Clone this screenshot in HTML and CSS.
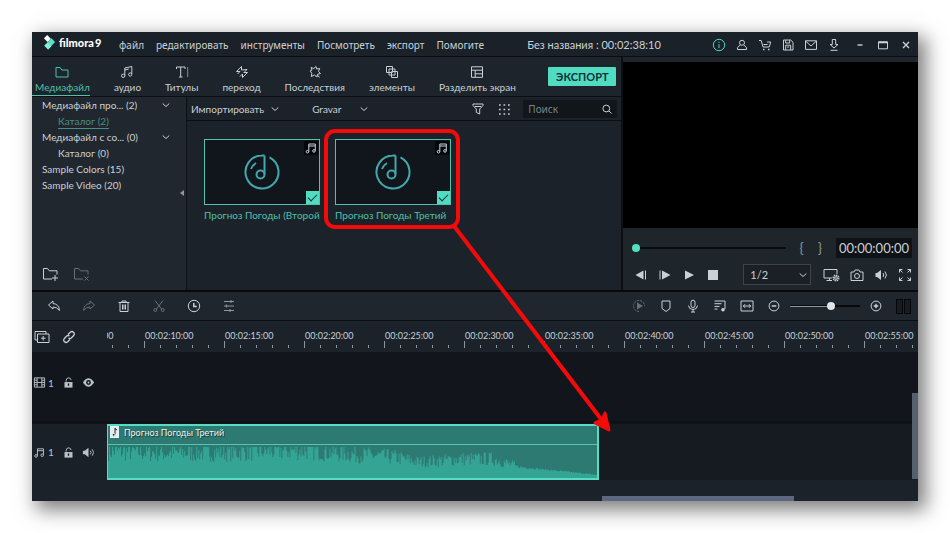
FILE: index.html
```html
<!DOCTYPE html>
<html lang="ru">
<head>
  <meta charset="UTF-8">
  <meta name="viewport" content="width=device-width, initial-scale=1.0">
  <title>Filmora 9</title>
  <link rel="stylesheet" href="styles.css">
</head>
<body>
  <div class="window">

    <header class="titlebar">
      <div class="logo">
        <svg width="14" height="16" viewBox="0 0 14 16"><path d="M1 3.500 4.500 0l4 4L5 7.500z" fill="#fff"/><path d="M9 3.500 13 7.500 5.500 15.500 1.500 11.500z" fill="#5be3c6"/><path d="M1.500 11.500 5 8l4 4-3.500 3.500z" fill="#8aeedb"/></svg>
        <span>filmora<b>9</b></span>
      </div>
      <nav class="menu">
        <button>файл</button>
        <button>редактировать</button>
        <button>инструменты</button>
        <button>Посмотреть</button>
        <button>экспорт</button>
        <button>Помогите</button>
      </nav>
      <h1 class="project">Без названия : 00:02:38:10</h1>
      <div class="system">
        <button class="teal" aria-label="Информация"><svg viewBox="0 0 14 14"><circle cx="7" cy="7" r="5.700"/><path d="M7 6.200v4M7 3.700v1.200"/></svg></button>
        <button aria-label="Профиль"><svg viewBox="0 0 14 14"><circle cx="7" cy="4.800" r="2.500"/><path d="M5.300 7 2.500 9.500v2h9v-2L8.700 7"/></svg></button>
        <button aria-label="Магазин"><svg viewBox="0 0 14 14"><path d="M1 2.500h2.200l1.800 6.500h6.200l1.500-5H9M5.500 6.500h4"/><path d="M5 11.500h1.500M10 11.500h1.500" stroke-width="1.600"/></svg></button>
        <button aria-label="Сохранить"><svg viewBox="0 0 14 14"><path d="M2.500 2h7.200L12 4.300V12H2.500zM4.700 12V7.200h5V12M4.700 2v3h4V2M6.200 9h2"/></svg></button>
        <button aria-label="Сообщения"><svg viewBox="0 0 14 14"><path d="M1.500 2.800h11v8.600h-11zM1.500 3l5.500 5 5.500-5"/></svg></button>
        <button aria-label="Загрузки"><svg viewBox="0 0 14 14"><path d="M5.300 1.500h3.400v5h2.200L7 10 3.100 6.500h2.200zM3.500 12.300h7"/></svg></button>
      </div>
      <div class="system caption">
        <button aria-label="Свернуть"><svg viewBox="0 0 14 14"><path d="M4.500 7h5" stroke-width="1.400"/></svg></button>
        <button aria-label="Развернуть"><svg viewBox="0 0 14 14"><path d="M2.500 4h9v6.800h-9z"/><path d="M2.500 4.300h9" stroke-width="2"/></svg></button>
        <button aria-label="Закрыть"><svg viewBox="0 0 14 14"><path d="m4 4 6 6M10 4l-6 6" stroke-width="1.400"/></svg></button>
      </div>
    </header>

    <main class="workspace">
      <section class="library">
        <div class="tabs">
          <button class="tab active"><svg viewBox="0 0 14 14"><path d="M1 2.500h4.200L6.700 5H13v7H1z"/></svg>Медиафайл</button>
          <button class="tab"><svg viewBox="0 0 14 14"><path d="M4.800 10.500V3l7-1.500V9M4.800 5l4-1"/><circle cx="3.200" cy="10.800" r="1.700"/><circle cx="10.200" cy="9.500" r="1.600"/></svg>аудио</button>
          <button class="tab"><svg viewBox="0 0 14 14"><path d="M1.500 4V2h8.500v2M5.700 2v10M4 12h3.500" /><path d="M12.700 2v10" opacity=".6"/></svg>Титулы</button>
          <button class="tab"><svg viewBox="0 0 14 14"><path d="M1.500 6.500 6.500 1.500V5l5.500-.5L8.500 8M1.500 6.500H5L2.500 9M12.500 7.500l-5 5V9L5 11.500M12.500 7.500H9"/></svg>переход</button>
          <button class="tab"><svg viewBox="0 0 14 14"><path d="m3 2.500 2.700 1L8 1.500l.7 2.500 3-.5-1.200 3 2 2-3 .8L9 12 6.500 10l-3.200 1.500.5-3.300L2 6l2-1zM9.500 10l2 2.500"/></svg>Последствия</button>
          <button class="tab"><svg viewBox="0 0 14 14"><path d="M1.500 1.500h6v6h-6zM4 7.500V10h6V4H7.500M6.500 10v2.500h6v-6H10M4 7.500V4h3.500M6.500 10V6.500H10"/></svg>элементы</button>
          <button class="tab"><svg viewBox="0 0 14 14"><path d="M1.500 1.800h11v10.500h-11zM1.500 5.200h11M5.200 5.200v7M5.200 8.800h7.300"/></svg>Разделить экран</button>
          <button class="export">ЭКСПОРТ</button>
        </div>

        <div class="library-body">
          <aside class="tree">
            <ul>
              <li><button>Медиафайл про... (2)<svg class="chevron" viewBox="0 0 8 8"><path d="m.7 2.500 3.300 3 3.300-3"/></svg></button></li>
              <li class="child"><a class="current" href="#">Каталог (2)</a></li>
              <li><button>Медиафайл с со... (0)<svg class="chevron" viewBox="0 0 8 8"><path d="m.7 2.500 3.300 3 3.300-3"/></svg></button></li>
              <li class="child"><a href="#">Каталог (0)</a></li>
              <li><a href="#">Sample Colors (15)</a></li>
              <li><a href="#">Sample Video (20)</a></li>
            </ul>
            <button class="collapse" aria-label="Скрыть панель"><svg viewBox="0 0 4 6"><path d="M4 0v6L0 3z"/></svg></button>
            <div class="tree-actions">
              <button aria-label="Новая папка"><svg viewBox="0 0 18 14"><path d="M10 12H1.500V1.500h4l1.800 2.300H15v3.700M13 8v6M10 11h6"/></svg></button>
              <button class="off" aria-label="Удалить папку"><svg viewBox="0 0 18 14"><path d="M10 12H1.500V1.500h4l1.800 2.300H15v3.700M11.500 9.500l4 4M15.500 9.500l-4 4"/></svg></button>
            </div>
          </aside>

          <div class="media">
            <div class="filters">
              <button>Импортировать<svg class="chevron" viewBox="0 0 8 8"><path d="m.7 2.500 3.300 3 3.300-3"/></svg></button>
              <button class="record">Gravar<svg class="chevron" viewBox="0 0 8 8"><path d="m.7 2.500 3.300 3 3.300-3"/></svg></button>
              <button class="icon push" aria-label="Фильтр"><svg viewBox="0 0 14 14"><path d="M2 2h10v1.500L8.700 7v5l-3.400-1.500V7L2 3.500zM4 4.500h6"/></svg></button>
              <button class="icon" aria-label="Вид"><svg viewBox="0 0 14 14"><path d="M2 3h11M2 7.500h11M2 12h11" stroke-width="1.700" stroke-dasharray="1.700 2.800"/></svg></button>
              <label class="search">
                <input type="text" placeholder="Поиск" aria-label="Поиск">
                <svg viewBox="0 0 10 10"><circle cx="4.300" cy="4.500" r="3.400"/><path d="m7 7 2.500 2.500"/></svg>
              </label>
            </div>

            <div class="clips">
              <label class="clip-card">
                <span class="thumb">
                  <svg class="disc" viewBox="0 0 36 36"><path d="M18 1.500A16.500 16.500 0 1 0 25.500 3.300M20.500 1.500v18.500M17.500 1.500h3M7 15a12 12 0 0 1 5-6"/><circle cx="16.500" cy="20.500" r="4"/></svg>
                  <svg class="note" viewBox="0 0 14 14"><path d="M4.800 10.500V3h6.500v6.500M4.800 5h6.500"/><circle cx="3.500" cy="10.700" r="1.300"/><circle cx="10" cy="9.900" r="1.300"/></svg>
                  <input type="checkbox" checked>
                </span>
                <span class="clip-name">Прогноз Погоды (Второй)</span>
              </label>
              <label class="clip-card">
                <span class="thumb">
                  <svg class="disc" viewBox="0 0 36 36"><path d="M18 1.500A16.500 16.500 0 1 0 25.500 3.300M20.500 1.500v18.500M17.500 1.500h3M7 15a12 12 0 0 1 5-6"/><circle cx="16.500" cy="20.500" r="4"/></svg>
                  <svg class="note" viewBox="0 0 14 14"><path d="M4.800 10.500V3h6.500v6.500M4.800 5h6.500"/><circle cx="3.500" cy="10.700" r="1.300"/><circle cx="10" cy="9.900" r="1.300"/></svg>
                  <input type="checkbox" checked>
                </span>
                <span class="clip-name">Прогноз Погоды Третий</span>
              </label>
            </div>
          </div>
        </div>
      </section>

      <section class="player">
        <div class="screen"></div>
        <div class="seek">
          <input type="range" min="0" max="100" value="0" aria-label="Позиция">
          <button aria-label="Начало отрезка">{</button>
          <button aria-label="Конец отрезка">}</button>
          <output>00:00:00:00</output>
        </div>
        <div class="transport">
          <button aria-label="Кадр назад"><svg class="solid" viewBox="0 0 14 14"><path d="M9.500 2.500v9L1.500 7z"/><path d="M11 2.500h1v9h-1z"/></svg></button>
          <button aria-label="Кадр вперёд"><svg class="solid" viewBox="0 0 14 14"><path d="M4 2.500v9L12.500 7z"/><path d="M1.500 2.500h1v9h-1z"/></svg></button>
          <button aria-label="Воспроизвести"><svg class="solid" viewBox="0 0 14 14"><path d="M3 2.500v9L12 7z"/></svg></button>
          <button aria-label="Стоп"><svg class="solid" viewBox="0 0 14 14"><path d="M2 2h10v10H2z"/></svg></button>
          <span class="quality">
            <select aria-label="Качество"><option>1/2</option></select>
            <svg class="chevron" viewBox="0 0 8 8"><path d="m.7 2.500 3.300 3 3.300-3"/></svg>
          </span>
          <button class="wide" aria-label="Настройки экрана"><svg viewBox="0 0 17 14"><path d="M9 10H1V1.500h13V6M3.500 12.500H9M6.500 10v2.500"/><circle cx="13" cy="10" r="2.600" stroke-width="1.800" stroke-dasharray="1.300 .7"/><circle cx="13" cy="10" r="1.300"/></svg></button>
          <button aria-label="Снимок"><svg viewBox="0 0 14 14"><path d="M1 4h3l1-2h4l1 2h3v8.500H1z"/><circle cx="7" cy="8" r="2.500"/></svg></button>
          <button aria-label="Громкость"><svg viewBox="0 0 14 14"><path class="fill" d="M1.500 5H3l4-3v10L3 9H1.500z"/><path d="M9 5q1.500 2 0 4M11 3.500q2.800 3.500 0 7"/></svg></button>
          <button aria-label="Во весь экран"><svg viewBox="0 0 14 14"><path d="M1.500 4.500v-3h3M1.500 1.500l3 3M9.500 1.500h3v3M12.500 1.500l-3 3M1.500 9.500v3h3M1.500 12.500l3-3M12.500 9.500v3h-3M12.500 12.500l-3-3"/></svg></button>
        </div>
      </section>
    </main>

    <div class="toolbar">
      <div class="edit-tools">
        <button aria-label="Отменить"><svg viewBox="0 0 14 14"><path d="M1.500 6 6 2v2.500q6 .5 6.500 7Q10 8 6 8v2z"/></svg></button>
        <button class="off" aria-label="Повторить"><svg viewBox="0 0 14 14"><path d="M12.500 6 8 2v2.500q-6 .5-6.500 7Q4 8 8 8v2z"/></svg></button>
        <button aria-label="Удалить"><svg viewBox="0 0 14 14"><path d="M1.500 3.500h11M5 3.500V2h4v1.500M3 3.500V12.500h8v-9M5.500 5.500v5M7 5.500v5M8.500 5.500v5"/></svg></button>
        <button class="off" aria-label="Разрезать"><svg viewBox="0 0 14 14"><path d="m3 1.500 6.500 8.500M11 1.500 4.500 10"/><circle cx="3.300" cy="11" r="1.500"/><circle cx="10.700" cy="11" r="1.500"/></svg></button>
        <button aria-label="Скорость"><svg viewBox="0 0 14 14"><circle cx="7" cy="7" r="5.700"/><path d="M6.800 4v3.500h3" stroke-width="1.500"/></svg></button>
        <button class="dim" aria-label="Настройки"><svg viewBox="0 0 14 14"><path d="M2 2.500h10M2 7h10M2 11.500h10M9 1v3M4.500 5.500v3M8 10v3"/></svg></button>
      </div>
      <div class="view-tools">
        <button class="off" aria-label="Рендер"><svg viewBox="0 0 14 14"><path d="M7 12.500A5.500 5.500 0 1 1 12.500 7" stroke-dasharray="2 1"/><path class="fill" d="M5 3.500v7L11 7z"/></svg></button>
        <button aria-label="Маркер"><svg viewBox="0 0 14 14"><path d="M3 2h8v7.500L7 12.500 3 9.500z"/></svg></button>
        <button aria-label="Запись голоса"><svg viewBox="0 0 14 14"><rect x="5" y="1.200" width="4" height="7.300" rx="2"/><path d="M2.500 6.500q.3 4 4.500 4t4.500-4M7 10.500V13M5 13h4"/></svg></button>
        <button aria-label="Аудиомикшер"><svg viewBox="0 0 14 14"><path d="M1.500 2h10.500v8M1.500 4.700h7M1.500 7.400h5M1.500 10h3"/><circle class="fill" cx="10" cy="10.800" r="1.800"/></svg></button>
        <button aria-label="По размеру"><svg viewBox="0 0 14 14"><path d="M1 2h12v10H1zM3.500 7h7M5 5.200 3.300 7 5 8.800M9 5.200 10.700 7 9 8.800"/></svg></button>
        <button aria-label="Уменьшить"><svg viewBox="0 0 14 14"><circle cx="7" cy="7" r="4.900"/><path d="M4.700 7h4.600" stroke-width="1.500"/></svg></button>
        <input class="zoom" type="range" min="0" max="100" value="60" aria-label="Масштаб">
        <button aria-label="Увеличить"><svg viewBox="0 0 14 14"><circle cx="7" cy="7" r="4.900"/><path d="M4.700 7h4.600M7 4.700v4.600" stroke-width="1.400"/></svg></button>
        <span class="meter"><i></i><i></i></span>
      </div>
    </div>

    <section class="timeline">
      <div class="row">
        <div class="head ruler-head">
          <button aria-label="Добавить дорожку"><svg viewBox="0 0 16 14"><path d="M3.500 10H1V1.500h11V4M3.500 4H15v8.500H3.500zM9.200 6v4.500M7 8.200h4.500"/></svg></button>
          <button aria-label="Связать"><svg viewBox="0 0 14 14"><path d="m6 4.500 2.300-2.300q1.700-1.400 3.200 0t.2 3.300L9.300 8Q7.800 9 6.500 8M8 9.500l-2.300 2.300q-1.700 1.400-3.200 0t-.2-3.300L4.700 6Q6.200 5 7.500 6" stroke-width="1.300"/></svg></button>
        </div>
        <ol class="ruler">
          <li>00:02:05:00</li>
          <li>00:02:10:00</li>
          <li>00:02:15:00</li>
          <li>00:02:20:00</li>
          <li>00:02:25:00</li>
          <li>00:02:30:00</li>
          <li>00:02:35:00</li>
          <li>00:02:40:00</li>
          <li>00:02:45:00</li>
          <li>00:02:50:00</li>
          <li>00:02:55:00</li>
        </ol>
      </div>
      <div class="row video-row">
        <div class="head">
          <svg viewBox="0 0 14 14"><path d="M1.500 2h11v10h-11zM4.500 2v10M9.500 2v10M1.500 4.500h3M1.500 7h11M1.500 9.500h3M9.500 4.500h3M9.500 9.500h3"/></svg>
          <span>1</span>
          <button aria-label="Заблокировать видео"><svg viewBox="0 0 14 14"><path class="fill" d="M2.700 6.500h8.600v6H2.700z"/><path d="M4.500 6V4.500q.3-2.500 2.700-2.500t2.500 2.500"/><path class="hole" d="M6.300 8h1.400v2.500H6.300z"/></svg></button>
          <button aria-label="Показать видео"><svg viewBox="0 0 14 14"><path class="fill" d="M1 7q6-9 12 0Q7 16 1 7z"/><circle class="hole" cx="7" cy="7" r="2.600"/><circle class="fill" cx="7" cy="7" r="1"/></svg></button>
        </div>
        <div class="lane"></div>
      </div>
      <div class="row audio-row">
        <div class="head">
          <svg viewBox="0 0 14 14"><path d="M4.800 10.500V3h6.500v6.500M4.800 5h6.500"/><circle cx="3.300" cy="10.700" r="1.400"/><circle cx="9.900" cy="9.900" r="1.400"/></svg>
          <span>1</span>
          <button aria-label="Заблокировать аудио"><svg viewBox="0 0 14 14"><path class="fill" d="M2.700 6.500h8.600v6H2.700z"/><path d="M4.500 6V4.500q.3-2.500 2.700-2.500t2.500 2.500"/><path class="hole" d="M6.300 8h1.400v2.500H6.300z"/></svg></button>
          <button aria-label="Звук дорожки"><svg viewBox="0 0 14 14"><path class="fill" d="M1 5h2l4-3v10L3 9H1z"/><path d="M9 5q1.500 2 0 4M11 3.500q2.800 3.500 0 7"/></svg></button>
        </div>
        <div class="lane">
          <article class="audio-clip">
            <h2><svg viewBox="0 0 9 12"><path d="M0 0h9v12H0z" fill="#e3edf0"/><path d="M5 2v6.500M5 2.500l2 1.500" stroke="#18232b"/><circle cx="3.700" cy="8.800" r="1.400" fill="#18232b"/></svg>Прогноз Погоды Третий</h2>
            <svg class="wave" viewBox="0 0 488 33" preserveAspectRatio="none"><path id="wave"/></svg>
          </article>
        </div>
      </div>
      <div class="timeline-end"></div>
      <span class="scroll-y"></span>
      <span class="scroll-x"></span>
    </section>

    <svg class="pointer" width="600" height="420" viewBox="0 0 600 420">
      <rect x="294" y="99" width="132" height="96" rx="9"/>
      <path d="M422 194 572 391"/>
      <path class="tip" d="m577 398-14-7 7-3 3-7z"/>
    </svg>
  </div>

  <script src="wave.js"></script>
</body>
</html>
```

FILE: styles.css
```css
* {
  box-sizing: border-box;
}
body {
  margin: 0;
  padding: 32px;
  background: #fff;
  font-family: Lato, "Noto Sans", sans-serif;
  font-size: 10px;
  color: #c9d1d6;
}
button, input, select {
  font: inherit;
  color: inherit;
  background: none;
  border: 0;
  padding: 0;
  margin: 0;
}
button {
  display: flex;
  align-items: center;
  white-space: nowrap;
  cursor: pointer;
}
a {
  color: inherit;
  text-decoration: none;
}
ul, ol {
  list-style: none;
  margin: 0;
  padding: 0;
}
svg {
  display: block;
  flex: none;
  width: 14px;
  height: 14px;
  fill: none;
  stroke: currentColor;
}
svg.solid, svg .fill {
  fill: currentColor;
  stroke: none;
}
svg .hole {
  fill: #12171d;
  stroke: none;
}
.chevron {
  width: 8px;
  height: 8px;
}
.off {
  color: #66707a;
}
.dim {
  color: #8d979e;
}

.window {
  position: relative;
  display: flex;
  flex-direction: column;
  min-height: calc(100vh - 64px);
  background: #1b2229;
  box-shadow: 6px 7px 18px 2px rgba(0, 0, 0, 0.5);
}

/* title bar */
.titlebar {
  display: flex;
  align-items: center;
  height: 25px;
  padding: 1px 5px 0 11px;
  background: #1b2128;
  border-bottom: 1px solid #090c10;
}
.logo {
  display: flex;
  align-items: center;
  gap: 3px;
  width: 76px;
  padding-bottom: 4px;
  color: #fff;
  font-size: 11px;
  font-weight: 900;
}
.logo svg {
  width: 13px;
  height: 15px;
  stroke: none;
}
.logo b {
  padding-left: 1px;
}
.menu {
  display: flex;
  gap: 12px;
  font-family: "Noto Sans", sans-serif;
}
.project {
  margin: 0 8px 0 0;
  flex: 1;
  text-align: center;
  font-size: 11px;
  font-weight: normal;
  white-space: nowrap;
}
.system {
  display: flex;
  gap: 9px;
}
.caption {
  margin-left: 12px;
}
.teal {
  color: #4fd0c4;
}

/* library */
.workspace {
  display: flex;
  flex: 1;
  min-height: 233px;
}
.library {
  display: flex;
  flex-direction: column;
  flex: 2;
  min-width: 0;
  border-right: 2px solid #0c1015;
}
.tabs {
  display: flex;
  align-items: center;
  gap: 24px;
  height: 40px;
  padding-right: 5px;
  background: #1d242c;
  border-bottom: 1px solid #0b0f13;
}
.tab {
  flex-direction: column;
  gap: 1px;
  height: 39px;
  padding-top: 8px;
  line-height: 14px;
  border-bottom: 1px solid transparent;
}
.tab.active {
  padding-left: 3px;
  color: #4fc0aa;
  border-color: #4fc0aa;
}
.export {
  flex: none;
  justify-content: center;
  margin-left: auto;
  width: 68px;
  height: 19px;
  border-radius: 1px;
  background: #4fdcc0;
  color: #12303a;
  font-size: 11px;
  font-weight: bold;
}
.library-body {
  display: flex;
  flex: 1;
}
.tree {
  position: relative;
  display: flex;
  flex-direction: column;
  width: 155px;
  padding-left: 10px;
  background: #20272f;
  border-right: 1px solid #0d1116;
}
.tree li {
  height: 16px;
  line-height: 16px;
}
.tree li button {
  justify-content: space-between;
  width: 100%;
  padding-right: 16px;
}
.tree .child {
  padding-left: 16px;
}
.tree .current {
  color: #4a8d86;
  text-decoration: underline;
  text-underline-offset: 3px;
}
.collapse {
  position: absolute;
  right: 2px;
  top: 48%;
  color: #8d979e;
}
.collapse svg {
  width: 4px;
  height: 6px;
  fill: currentColor;
  stroke: none;
}
.tree-actions {
  display: flex;
  gap: 13px;
  margin-top: auto;
  padding-bottom: 9px;
}
.tree-actions svg {
  width: 18px;
}
.media {
  flex: 1;
  min-width: 0;
}
.filters {
  display: flex;
  align-items: center;
  height: 24px;
  padding: 0 4px;
  border-bottom: 1px solid #0b0f13;
}
.filters .chevron {
  margin-left: 7px;
}
.filters .record {
  margin-left: 33px;
}
.filters .record .chevron {
  margin-left: 19px;
}
.filters .push {
  margin-left: auto;
}
.filters .icon {
  margin-right: 12px;
}
.search {
  display: flex;
  align-items: center;
  width: 94px;
  height: 18px;
  padding: 0 5px;
  background: #11161b;
}
.search input {
  flex: 1;
  min-width: 0;
  outline: none;
  font-family: "Noto Sans", sans-serif;
}
.search input::placeholder {
  color: #7b858c;
}
.search svg {
  width: 10px;
  height: 10px;
}
.clips {
  display: flex;
  flex-wrap: wrap;
  gap: 15px;
  padding: 18px 17px;
}
.clip-card {
  width: 116px;
  color: #4fc0aa;
}
.thumb {
  position: relative;
  display: flex;
  align-items: center;
  justify-content: center;
  height: 66px;
  background: #11161c;
  border: 1px solid #57bfae;
}
.disc {
  width: 36px;
  height: 36px;
  color: #43a7ab;
  stroke-width: 2;
}
.note {
  position: absolute;
  top: 1px;
  right: 1px;
  background: #05070a;
  color: #c9d1d6;
}
.thumb input {
  position: absolute;
  right: 0;
  bottom: 0;
  appearance: none;
  width: 13px;
  height: 13px;
  background: #4fdcc0;
}
.thumb input:checked::after {
  content: "";
  display: block;
  width: 8px;
  height: 4px;
  margin: 3px 2px;
  border: solid #12303a;
  border-width: 0 0 1px 1px;
  transform: rotate(-45deg);
}
.clip-name {
  display: block;
  padding-top: 3px;
  line-height: 14px;
  white-space: nowrap;
  overflow: hidden;
}

/* player */
.player {
  display: flex;
  flex-direction: column;
  flex: 1;
  min-width: 0;
  padding-top: 5px;
  background: #1e252b;
}
.screen {
  flex: 1;
  background: #000;
}
.seek {
  display: flex;
  align-items: center;
  gap: 14px;
  padding: 10px 6px 0 9px;
}
.seek input {
  flex: 1;
  min-width: 0;
}
.seek button {
  color: #8d979e;
  font-size: 14px;
  line-height: 14px;
}
.seek output {
  width: 76px;
  height: 20px;
  line-height: 20px;
  text-align: center;
  font-size: 13px;
  background: #0f1317;
}
input[type="range"] {
  appearance: none;
  height: 10px;
  background: linear-gradient(#07090b, #07090b) center / 100% 2px no-repeat;
}
input[type="range"]::-webkit-slider-thumb {
  appearance: none;
  width: 8px;
  height: 8px;
  border-radius: 50%;
  background: #4fe3c0;
}
.transport {
  display: flex;
  align-items: center;
  gap: 10px;
  padding: 6px 6px 5px 11px;
}
.quality {
  position: relative;
  flex: 1;
  max-width: 70px;
  margin: 0 2px 0 13px;
  font-size: 11px;
}
.quality select {
  appearance: none;
  display: block;
  width: 100%;
  height: 21px;
  padding-left: 6px;
  border: 1px solid #3b444c;
  background: #1a2026;
}
.quality .chevron {
  position: absolute;
  right: 4px;
  top: 7px;
}
.wide svg {
  width: 17px;
}

/* toolbar */
.toolbar {
  display: flex;
  align-items: center;
  justify-content: space-between;
  height: 31px;
  padding: 0 7px 0 15px;
  background: #1f262e;
  border-top: 2px solid #07090c;
  border-bottom: 1px solid #0a0d11;
}
.edit-tools {
  display: flex;
  gap: 21px;
}
.view-tools {
  display: flex;
  align-items: center;
  gap: 13px;
}
.zoom {
  width: 70px;
  margin: 0 -4px;
}
input.zoom {
  background:
    linear-gradient(#8d979e, #8d979e) left / 60% 1px no-repeat,
    linear-gradient(#07090b, #07090b) center / 100% 2px no-repeat;
}
input.zoom::-webkit-slider-thumb {
  background: #dfe5e8;
}
.meter {
  display: flex;
  gap: 1px;
}
.meter i {
  width: 7px;
  height: 15px;
  background: #171c22;
  border: 1px solid #05070a;
}

/* timeline */
.timeline {
  position: relative;
  overflow: hidden;
}
.row {
  display: flex;
}
.head {
  display: flex;
  align-items: center;
  flex: none;
  width: 75px;
  padding-left: 1px;
  color: #b9c2c8;
}
.head svg {
  width: 13px;
  height: 13px;
}
.head span {
  width: 15px;
  padding-left: 2px;
}
.head button {
  margin-left: 1px;
  margin-right: 6px;
}
.ruler-head {
  height: 31px;
  color: #c9d1d6;
}
.ruler-head button {
  margin-right: 10px;
}
.ruler-head svg {
  width: 16px;
  height: 14px;
}
.ruler {
  display: flex;
  flex: 1;
  overflow: hidden;
}
.ruler li {
  flex: none;
  width: 80px;
  height: 27px;
  padding: 8px 0 0 1px;
  font-size: 9px;
  line-height: 14px;
  background:
    linear-gradient(#8d979e, #8d979e) left bottom / 1px 7px no-repeat,
    repeating-linear-gradient(90deg, #8d979e 0 1px, transparent 1px 16px) left bottom / 100% 3px no-repeat;
}
/* the strip is scrolled a little past 00:02:05:00 */
.ruler li:first-child {
  margin-left: -43px;
}
.lane {
  flex: 1;
  min-width: 0;
}
.video-row {
  height: 72px;
  background: #12161c;
  border-bottom: 3px solid #0e1217;
}
.video-row .head {
  padding-bottom: 8px;
}
.audio-row {
  height: 56px;
  background: #161b22;
}
.audio-row .head {
  background: #1a2028;
}
.audio-clip {
  display: flex;
  flex-direction: column;
  width: 492px;
  max-width: 100%;
  height: 56px;
  border: 2px solid #56dcc3;
  border-width: 2px 2px 2px 1px;
  background: #2d7a73;
}
.audio-clip h2 {
  display: flex;
  align-items: center;
  gap: 5px;
  flex: 1;
  margin: 0;
  padding: 0 0 6px 2px;
  color: #eaf4f3;
  font-size: 9px;
  font-weight: normal;
  border-bottom: 1px solid #56c4b3;
  text-shadow: 1px 1px 1px #14332f;
}
.audio-clip h2 svg {
  width: 9px;
  height: 12px;
}
.audio-clip .wave {
  width: 100%;
  height: 33px;
  fill: #34a595;
  stroke: none;
}
.timeline-end {
  height: 21px;
}
.scroll-y {
  position: absolute;
  right: 0;
  bottom: 22px;
  width: 6px;
  height: 86px;
  background: #56616e;
}
.scroll-x {
  position: absolute;
  right: 124px;
  bottom: 0;
  width: 192px;
  height: 5px;
  background: #5d6781;
}

/* red frame and arrow over the window */
.pointer {
  position: absolute;
  left: 0;
  top: 0;
  width: 600px;
  height: 420px;
  stroke: #f50a0a;
  stroke-width: 4;
  pointer-events: none;
}
.pointer .tip {
  fill: #f50a0a;
  stroke-width: 3;
  stroke-linejoin: round;
}
```

FILE: wave.js
```javascript
// level of the sound along the clip: [x, height]
const levels = [[0, 27], [60, 25], [130, 26], [200, 28], [240, 24], [285, 21], [310, 16], [350, 19], [385, 19], [410, 11], [440, 8], [470, 5], [488, 3]];

function levelAt(x) {
  for (let i = 1; i < levels.length; i++) {
    const [x0, y0] = levels[i - 1];
    const [x1, y1] = levels[i];
    if (x <= x1) return y0 + (y1 - y0) * (x - x0) / (x1 - x0);
  }
  return 0;
}

let seed = 7;
function noise() {
  seed = (seed * 16807) % 2147483647;
  return seed / 2147483647;
}

let d = 'M0 33';
for (let x = 0; x < 488; x++) {
  const swing = x > 405 ? 0.2 : 0.75;
  const h = Math.min(31, levelAt(x) * (1 - swing / 2 + noise() * swing));
  d += `V${(33 - h).toFixed(1)}h1`;
}
document.getElementById('wave').setAttribute('d', d + 'V33z');
```
